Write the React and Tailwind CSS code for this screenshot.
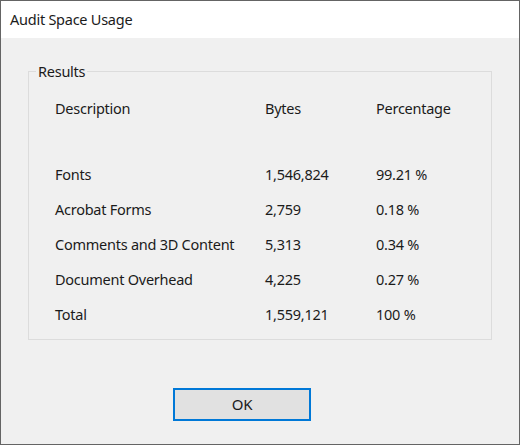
import React from 'react';

const rows = [
    { name: 'Fonts', bytes: '1,546,824', pct: '99.21 %' },
    { name: 'Acrobat Forms', bytes: '2,759', pct: '0.18 %' },
    { name: 'Comments and 3D Content', bytes: '5,313', pct: '0.34 %' },
    { name: 'Document Overhead', bytes: '4,225', pct: '0.27 %' },
    { name: 'Total', bytes: '1,559,121', pct: '100 %' },
];

const Row = ({ a, b, c }) => (
    <div className="grid grid-cols-[210px_111px_1fr] h-[35px] items-center">
        <span>{a}</span>
        <span>{b}</span>
        <span>{c}</span>
    </div>
);

const App = () => {
    return (
        <div
            className="w-[520px] h-[446px] bg-white text-[14.5px] tracking-[-0.25px] text-[#1b1b1b]"
            style={{ fontFamily: '"Noto Sans", "Segoe UI", sans-serif' }}
        >
            <div className="w-[520px] h-[445px] border border-[#646464] flex flex-col">
                <div className="h-[37px] bg-white flex items-center pl-[9px] shrink-0">
                    Audit Space Usage
                </div>
                <div className="flex-1 bg-[#f0f0f0] flex flex-col">
                    <div className="relative ml-[27px] mt-[33px] w-[464px] h-[269px] border border-[#dcdcdc]">
                        <span className="absolute left-[7px] top-[-10px] px-[2px] bg-[#f0f0f0] leading-[18px]">
                            Results
                        </span>
                        <div className="pl-[26px] pt-[19px]">
                            <Row a="Description" b="Bytes" c="Percentage" />
                            <div className="h-[31px]" />
                            {rows.map((r) => (
                                <Row key={r.name} a={r.name} b={r.bytes} c={r.pct} />
                            ))}
                        </div>
                    </div>
                    <button className="ml-[172px] mt-[48px] w-[138px] h-[33px] border-2 border-[#0078d7] bg-[#e1e1e1] flex items-center justify-center text-[15px]">
                        OK
                    </button>
                </div>
            </div>
        </div>
    );
};

export default App;
